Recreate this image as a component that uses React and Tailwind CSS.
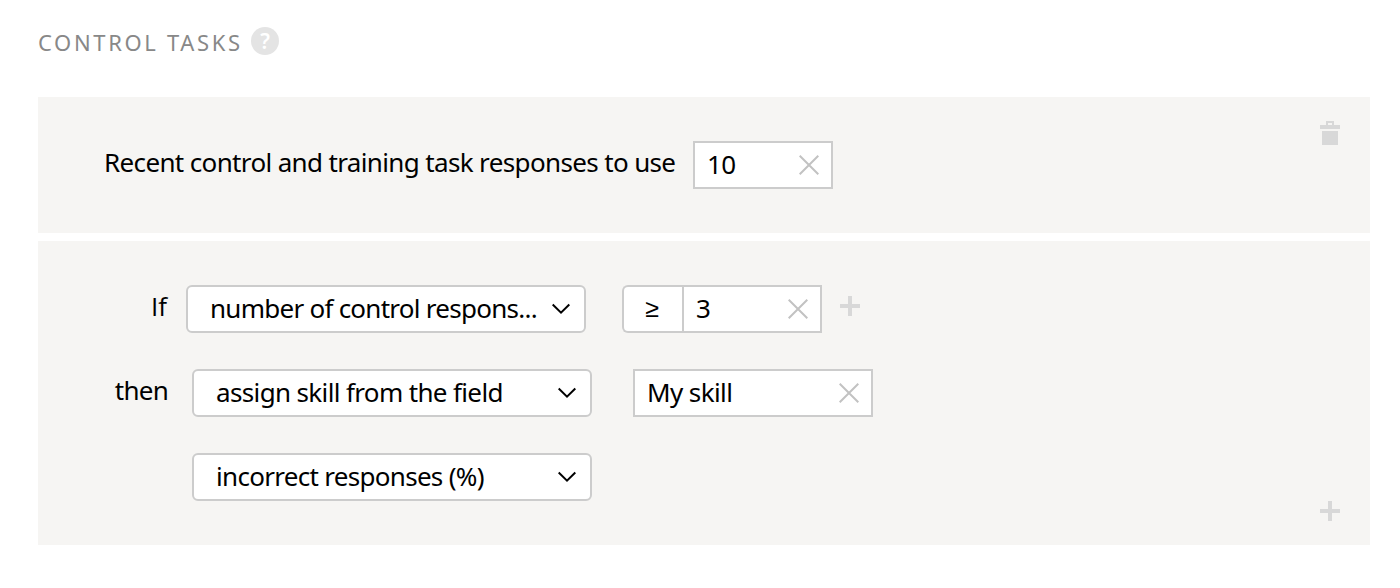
const Cross = () => (
  <svg className="size-5 shrink-0" viewBox="0 0 20 20" fill="none" stroke="#c2c2c2" strokeWidth="2">
    <path d="M0.7 0.7 19.3 19.3M19.3 0.7 0.7 19.3" />
  </svg>
);

const Chevron = () => (
  <svg className="h-3 w-[18px] shrink-0" viewBox="0 0 18 12" fill="none" stroke="#000" strokeWidth="2">
    <path d="M0.7 1.5 9 9.6 17.3 1.5" />
  </svg>
);

const Plus = () => (
  <svg className="size-5 shrink-0" viewBox="0 0 20 20" fill="#d8d8d8">
    <path d="M8 0h4v8h8v4h-8v8H8v-8H0V8h8z" />
  </svg>
);

const Trash = () => (
  <svg className="h-6 w-5 shrink-0" viewBox="0 0 20 24" fill="#d8d8d8">
    <path d="M6 0h8v4h6v4H0V4h6zM8 2v2h4V2zM2 10h16v14H2z" fillRule="evenodd" />
  </svg>
);

const Field = ({ width, children }) => (
  <div className={`flex h-12 items-center justify-between border-2 border-[#cccccc] bg-white pr-3 pl-3 ${width}`}>
    <span className="pb-0.5 tracking-[-0.6px]">{children}</span>
    <Cross />
  </div>
);

const Select = ({ children }) => (
  <div className="flex h-12 w-[400px] shrink-0 items-center justify-between rounded-[6px] border-2 border-[#cccccc] bg-white pr-[14px] pl-[22px]">
    <span className="pb-0.5">{children}</span>
    <Chevron />
  </div>
);

export default function App() {
  return (
    <main className="h-[588px] w-[1400px] bg-white pt-[27px] pr-[30px] pl-[38px] font-['Noto_Sans',sans-serif] text-[26px] leading-9 whitespace-nowrap text-black">
      <header className="flex h-[70px] items-start">
        <h1 className="-mt-px w-[213px] text-[22px] leading-8 tracking-[2.65px] text-[#888888]">CONTROL TASKS</h1>
        <span className="flex size-7 items-center justify-center rounded-full bg-[#e4e4e4] text-[21px] leading-7 font-semibold text-white">?</span>
      </header>

      <section className="flex h-[136px] items-start bg-[#f6f5f3] pt-11 pl-[66px]">
        <span className="w-[589px] pt-[3px] tracking-[-0.64px]">Recent control and training task responses to use</span>
        <Field width="w-[140px]">10</Field>
        <div className="-mt-5 mr-[30px] ml-auto">
          <Trash />
        </div>
      </section>

      <section className="mt-2 flex h-[304px] items-end justify-between bg-[#f6f5f3] pb-11">
        <div className="flex flex-col gap-9">
          <div className="flex items-center">
            <span className="w-[148px] pr-[19px] pb-1.5 text-right font-['Open_Sans',sans-serif]">If</span>
            <Select>
              <span className="tracking-[-0.74px]">number of control respons...</span>
            </Select>
            <div className="ml-9 flex h-12 w-[60px] items-center justify-center rounded-l-[6px] border-2 border-r-0 border-[#cccccc] bg-white pr-0.5 pb-1 text-[25px] font-medium">≥</div>
            <Field width="w-[140px]">3</Field>
            <div className="ml-[18px] pb-1.5">
              <Plus />
            </div>
          </div>
          <div className="flex items-center">
            <span className="w-[154px] pr-6 pb-1.5 text-right tracking-[-0.75px]">then</span>
            <Select>
              <span className="tracking-[-0.64px]">assign skill from the field</span>
            </Select>
            <div className="ml-[41px]">
              <Field width="w-[240px]">My skill</Field>
            </div>
          </div>
          <div className="pl-[154px]">
            <Select>
              <span className="tracking-[-0.7px]">incorrect responses (%)</span>
            </Select>
          </div>
        </div>
        <div className="mr-[30px] -mb-5">
          <Plus />
        </div>
      </section>
    </main>
  );
}
